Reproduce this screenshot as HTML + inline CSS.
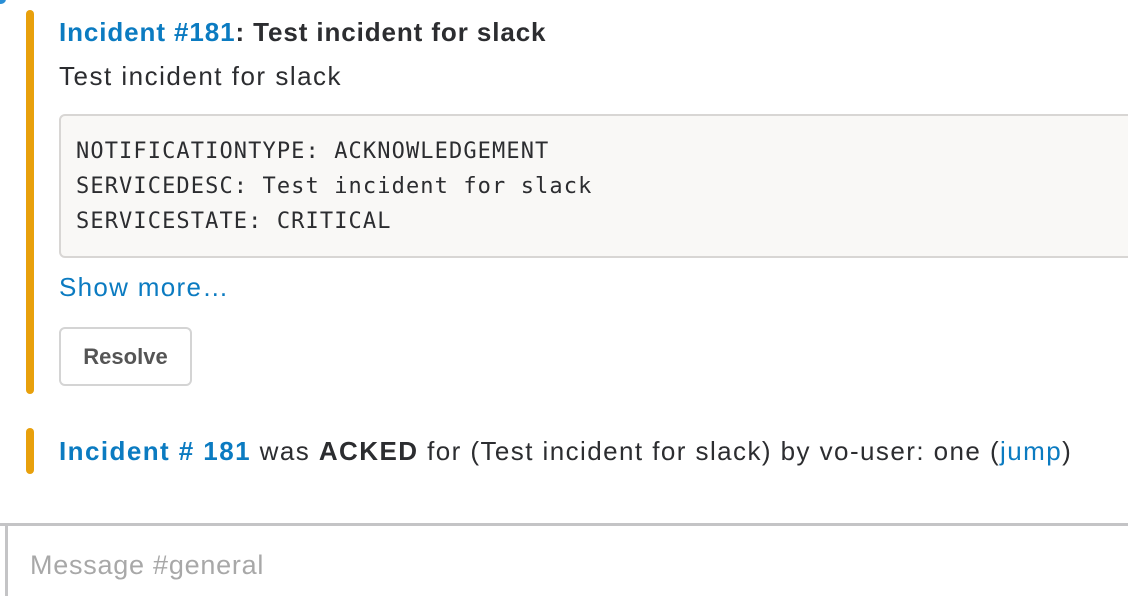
<!DOCTYPE html>
<html><head><style>
body{margin:0;width:1128px;height:592px;background:#fff;position:relative;overflow:hidden;font-family:"Liberation Sans",sans-serif;color:#2c2d30}
.a{position:absolute;white-space:nowrap}
.bar{position:absolute;left:26px;width:8px;background:#e8a00c;border-radius:4px}
.blue{color:#0b7bc1}
</style></head><body>
<div class="a" style="left:-4px;top:-6px;width:10px;height:10px;border-radius:50%;background:#2a8fd6"></div>
<div class="bar" style="top:10px;height:384px"></div>
<div class="a" style="left:59px;top:17px;font-size:26px;font-weight:bold;letter-spacing:0.9px"><span class="blue">Incident #181</span>: Test incident for slack</div>
<div class="a" style="left:59px;top:61px;font-size:26px;letter-spacing:1.5px">Test incident for slack</div>
<div class="a" style="left:59px;top:114px;width:1090px;height:140px;background:#f9f8f6;border:2px solid #d8d6d4;border-radius:6px"></div>
<div class="a" style="left:76px;top:134px;font-family:'DejaVu Sans Mono','Liberation Mono',monospace;font-size:22px;line-height:35px;color:#2c2d30;letter-spacing:1.1px">NOTIFICATIONTYPE: ACKNOWLEDGEMENT<br>SERVICEDESC: Test incident for slack<br>SERVICESTATE: CRITICAL</div>
<div class="a blue" style="left:59px;top:272px;font-size:26px;letter-spacing:1.3px">Show more…</div>
<div class="a" style="left:59px;top:327px;width:129px;height:55px;border:2px solid #d4d4d4;border-radius:6px;font-size:22px;font-weight:bold;color:#555;text-align:center;line-height:55px">Resolve</div>
<div class="bar" style="top:428px;height:46px"></div>
<div class="a" style="left:59px;top:436px;font-size:26px;letter-spacing:1.43px"><b class="blue">Incident # 181</b> was <b>ACKED</b> for (Test incident for slack) by vo-user: one (<span class="blue">jump</span>)</div>
<div class="a" style="left:0;top:523px;width:1128px;height:3px;background:#c4c4c6"></div>
<div class="a" style="left:5px;top:526px;width:3px;height:70px;background:#c4c4c6"></div>
<div class="a" style="left:30px;top:550px;font-size:27px;color:#a8a8a8;letter-spacing:0.75px">Message #general</div>
</body></html>
